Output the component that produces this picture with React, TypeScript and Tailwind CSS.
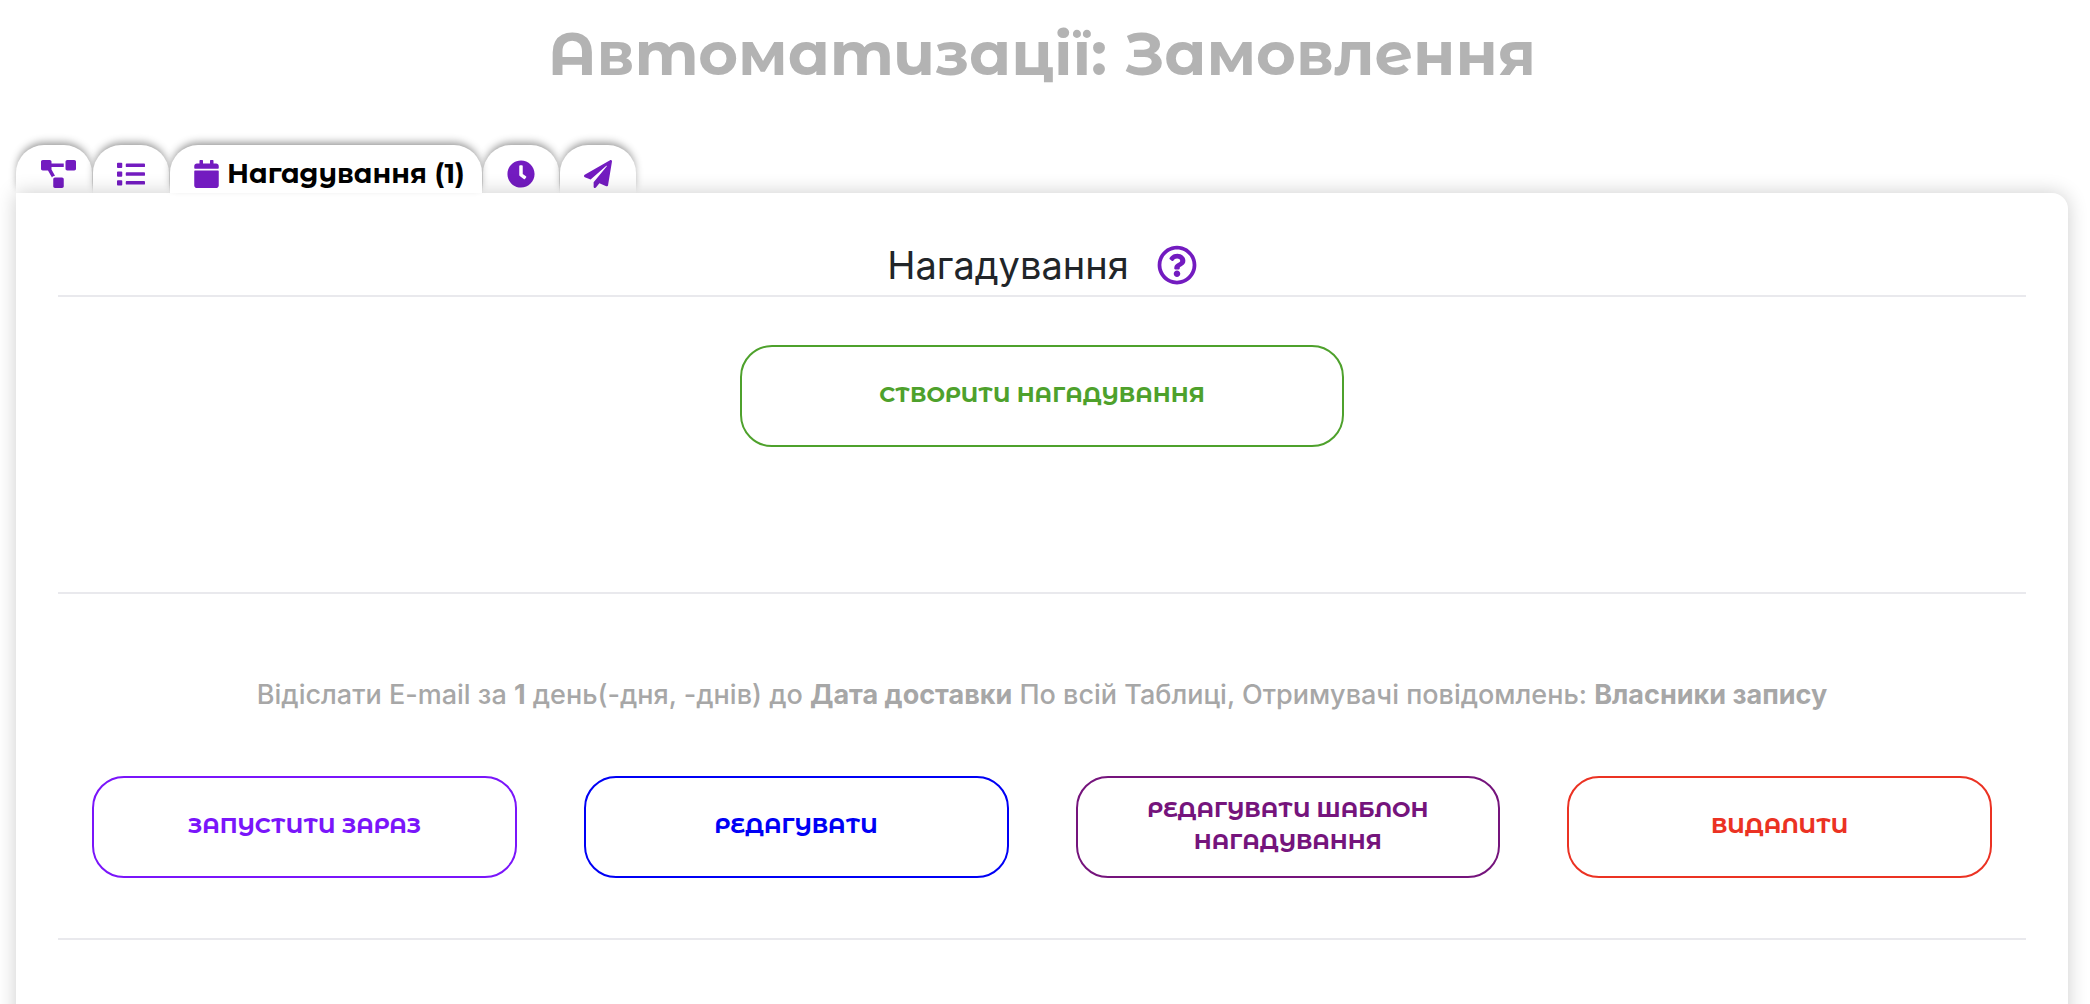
import type { ReactNode } from 'react';
import clsx from 'clsx';
import {
  FaCalendar,
  FaClock,
  FaList,
  FaPaperPlane,
  FaProjectDiagram,
  FaRegQuestionCircle,
} from 'react-icons/fa';

const tabs = [
  { label: 'Схема', icon: <FaProjectDiagram className="h-7 w-[35px]" />, width: 'w-[76px] pl-2' },
  { label: 'Список', icon: <FaList className="size-7" />, width: 'w-[76px]' },
  { label: 'Нагадування (1)', icon: <FaCalendar className="h-7 w-[25px]" />, width: 'pl-6 pr-[17px]', active: true },
  { label: 'Розклад', icon: <FaClock className="size-7" />, width: 'w-[76px]' },
  { label: 'Розсилка', icon: <FaPaperPlane className="size-7" />, width: 'w-[76px]' },
];

const actions = [
  { label: 'Запустити зараз', color: 'border-[#7a15fa] text-[#7a15fa]' },
  { label: 'Редагувати', color: 'border-[#0000f5] text-[#0000f5]' },
  { label: 'Редагувати шаблон нагадування', color: 'border-[#75147c] text-[#75147c]' },
  { label: 'Видалити', color: 'border-[#eb3223] text-[#eb3223]' },
];

function OutlineButton({ className, children }: { className?: string; children: ReactNode }) {
  return (
    <button
      type="button"
      className={clsx(
        'min-h-[102px] rounded-[32px] border-2 bg-white px-12 pb-0.5 text-[22px] leading-8 font-bold uppercase',
        className
      )}
    >
      {children}
    </button>
  );
}

export default function App() {
  return (
    <div className="h-screen overflow-hidden bg-white pr-[22px] pl-4 font-['Montserrat_Alternates',Inter,sans-serif]">
      <h1 className="pt-4 text-center text-[61px] leading-[74px] font-bold text-[#b3b3b3]">
        Автоматизації: Замовлення
      </h1>

      <div role="tablist" className="mt-[55px] flex gap-px">
        {tabs.map((tab) => (
          <button
            key={tab.label}
            type="button"
            role="tab"
            aria-selected={!!tab.active}
            aria-label={tab.label}
            className={clsx(
              'flex h-12 items-center justify-center gap-2 rounded-t-[28px] bg-white pt-2.5 text-[#731bc0] shadow-[0_-4px_8px_-2px_rgba(0,0,0,0.45)]',
              tab.width,
              tab.active && 'relative z-20'
            )}
          >
            {tab.icon}
            {tab.active && (
              <span className="text-[27px] leading-8 font-bold whitespace-nowrap text-black">{tab.label}</span>
            )}
          </button>
        ))}
      </div>

      <main className="relative z-10 min-h-screen rounded-tr-2xl bg-white px-[42px] pt-[46px] shadow-[0_0_20px_rgba(0,0,0,0.2)]">
        <div className="flex items-center justify-center gap-7 border-b-2 border-[#e9e9ed] pb-1">
          <h2 className="font-[Inter,sans-serif] text-[38px] leading-[52px] text-[#212529]">Нагадування</h2>
          <button type="button" aria-label="Довідка" className="text-[#731bc0]">
            <FaRegQuestionCircle className="size-10" />
          </button>
        </div>

        <div className="flex justify-center border-b-2 border-[#e9e9ed] pt-12 pb-[145px]">
          <OutlineButton className="w-[604px] border-[#4ea12c] text-[#4ea12c]">Створити нагадування</OutlineButton>
        </div>

        <section className="border-b-2 border-[#e9e9ed] pt-20 pb-[60px]">
          <p className="text-center font-[Inter,sans-serif] text-[27px] leading-[42px] font-medium text-[#a7a7a7]">
            Відіслати E-mail за <b>1</b> день(-дня, -днів) до <b>Дата доставки</b> По всій Таблиці, Отримувачі
            повідомлень: <b>Власники запису</b>
          </p>
          <div className="mt-[60px] grid grid-cols-4 gap-[67px] px-[34px]">
            {actions.map((action) => (
              <OutlineButton key={action.label} className={action.color}>
                {action.label}
              </OutlineButton>
            ))}
          </div>
        </section>
      </main>
    </div>
  );
}
